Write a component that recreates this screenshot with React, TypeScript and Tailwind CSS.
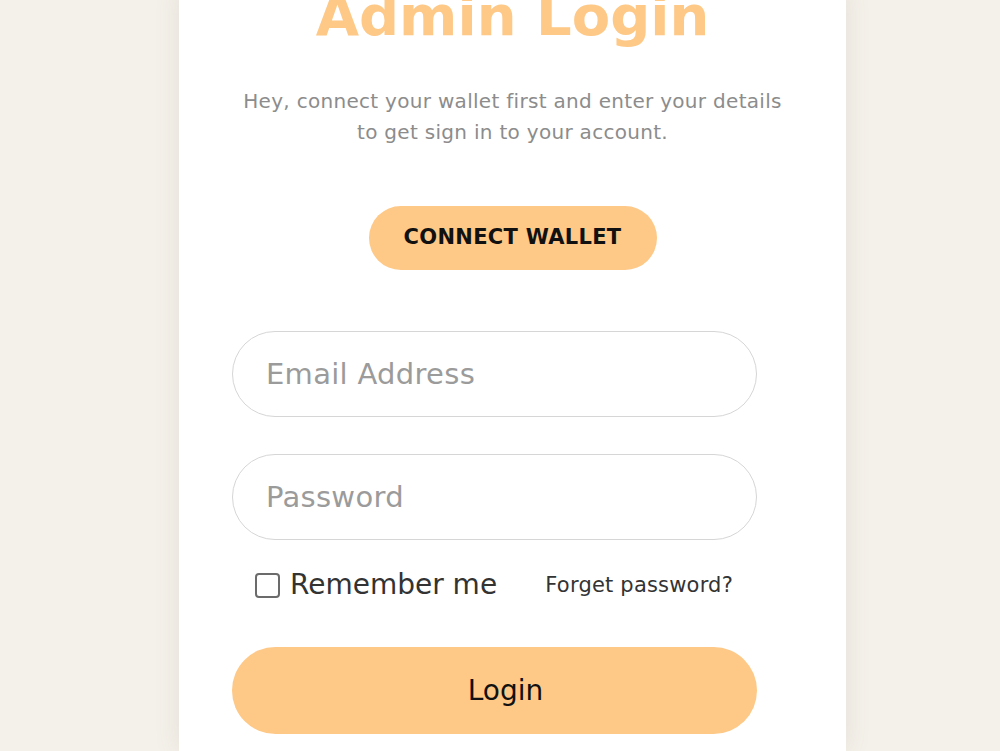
import React from "react";

export default function App() {
  const font = { fontFamily: '"DejaVu Sans", "Open Sans", sans-serif' };
  return (
    <div className="min-h-[751px] h-[751px] overflow-hidden bg-[#f4f1ea] flex justify-center pl-[25px]" style={font}>
      <div className="w-[667px] bg-white shadow-[0_0_24px_rgba(120,110,90,0.12)] -mt-[12px] flex flex-col">
        <h1 className="text-center text-[56px] leading-[56px] font-bold text-[#fec887]">
          Admin Login
        </h1>
        <p className="mt-[42px] text-center text-[20px] leading-[31px] tracking-[0.3px] text-[#8c8c8c]">
          Hey, connect your wallet first and enter your details
          <br />
          to get sign in to your account.
        </p>
        <div className="flex justify-center mt-[58px]">
          <button className="w-[288px] h-[64px] rounded-full bg-[#fec887] text-[21px] tracking-[0.3px] font-bold text-[#111]">
            CONNECT WALLET
          </button>
        </div>
        <div className="pl-[53px] flex flex-col">
          <input
            placeholder="Email Address"
            className="mt-[61px] w-[525px] h-[86px] rounded-full border-[1.5px] border-[#d6d6d6] pl-[33px] text-[29px] tracking-[0.3px] text-[#333] placeholder:text-[#9b9b9b] outline-none"
          />
          <input
            type="password"
            placeholder="Password"
            className="mt-[37px] w-[525px] h-[86px] rounded-full border-[1.5px] border-[#d6d6d6] pl-[33px] text-[29px] tracking-[0.3px] text-[#333] placeholder:text-[#9b9b9b] outline-none"
          />
          <div className="mt-[31px] flex items-center w-[525px] h-[28px]">
            <span className="ml-[23px] w-[25px] h-[25px] border-2 border-[#6b6b6b] rounded-[4px] bg-white"></span>
            <span className="ml-[10px] text-[28px] text-[#333] leading-[28px]">Remember me</span>
            <span className="ml-auto mr-[24px] text-[21px] tracking-[0.2px] text-[#333] leading-[28px]">Forget password?</span>
          </div>
          <button className="mt-[48px] w-[525px] h-[87px] rounded-full bg-[#fec887] pl-[22px] text-[28px] text-[#111]">
            Login
          </button>
        </div>
        <div className="h-[60px]"></div>
      </div>
    </div>
  );
}
